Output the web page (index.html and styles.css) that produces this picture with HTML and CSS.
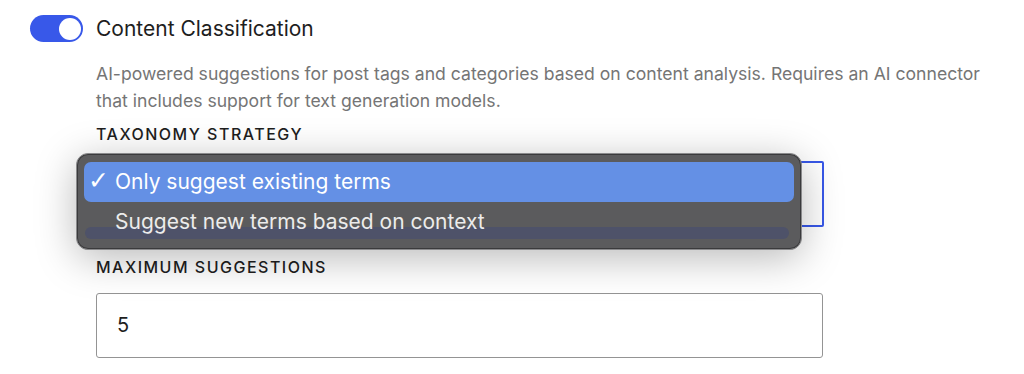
FILE: index.html
```html
<!DOCTYPE html>
<html lang="en">
<head>
  <meta charset="UTF-8">
  <title>Content Classification</title>
  <link rel="stylesheet" href="styles.css">
</head>
<body>

<section class="setting">
  <div class="setting-head">
    <span class="toggle"><span class="knob"></span></span>
    <h2>Content Classification</h2>
  </div>

  <div class="setting-body">
    <p class="desc">AI-powered suggestions for post tags and categories based on content analysis. Requires an AI connector that includes support for text generation models.</p>

    <label class="field-label">Taxonomy Strategy</label>
    <div class="select-wrap">
      <div class="select"></div>
      <div class="menu">
        <div class="menu-item active"><span class="check">✓</span>Only suggest existing terms</div>
        <div class="menu-item">Suggest new terms based on context</div>
        <div class="menu-ghost"></div>
      </div>
    </div>

    <label class="field-label second">Maximum Suggestions</label>
    <div class="input">5</div>
  </div>
</section>

</body>
</html>
```

FILE: styles.css
```css
body { margin: 0; background: #fff; font-family: Inter, "Noto Sans", sans-serif; color: #1e1e1e; }
.setting { padding: 15px 0 0 30px; }
.setting-head { display: flex; align-items: center; gap: 13px; }
.toggle { position: relative; width: 53px; height: 27px; border-radius: 14px; background: #3858e9; }
.knob { position: absolute; right: 2px; top: 2.5px; width: 22px; height: 22px; border-radius: 50%; background: #fff; }
h2 { margin: 0; font-size: 21px; font-weight: 400; }
.setting-body { padding-left: 66px; width: 900px; }
.desc { margin: 18px 0 0; font-size: 17.6px; line-height: 27px; color: #757575; }
.field-label { display: block; margin-top: 9px; font-size: 16px; font-weight: 500; text-transform: uppercase; letter-spacing: 1.5px; line-height: 22px; }
.field-label.second { margin-top: 29px; }
.select-wrap { position: relative; margin-top: 16px; width: 728px; }
.select { height: 62px; border: 2px solid #3858e9; border-radius: 2px; }
.menu { position: absolute; left: -20px; top: -8px; width: 710px; height: 79px; padding: 8px 7px; background: #5b5b5d; border: 1px solid #8a8a8c; border-radius: 12px; box-shadow: 0 0 0 1px #3a3a3c inset, 0 8px 40px rgba(0, 0, 0, 0.28); }
.menu-item { position: relative; z-index: 1; height: 40px; padding-left: 31px; border-radius: 7px; font-size: 21px; line-height: 40px; color: #ececec; }
.menu-item.active { background: #6490e5; color: #fff; }
.check { position: absolute; left: 4px; top: -1px; font-family: "DejaVu Sans", sans-serif; font-size: 25px; font-weight: 400; }
.menu-ghost { position: absolute; left: 8px; right: 12px; top: 73px; height: 12px; border-radius: 6px; background: #4e5269; }
.input { margin-top: 15px; width: 705px; height: 63px; padding-left: 20px; border: 1px solid #949494; border-radius: 3px; font-size: 20px; line-height: 63px; }
```
